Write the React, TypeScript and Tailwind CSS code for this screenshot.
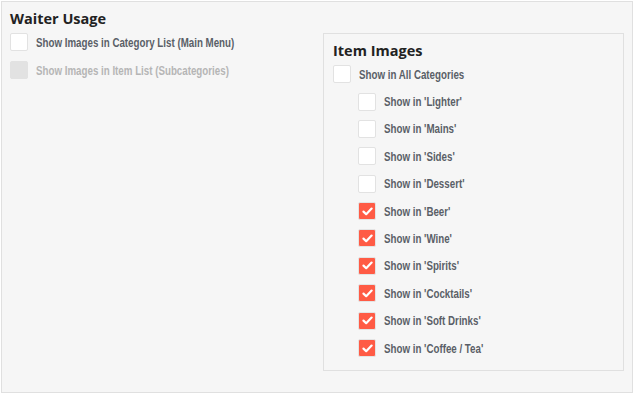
import React from "react";

const items = [
  { label: "Show in 'Lighter'", checked: false },
  { label: "Show in 'Mains'", checked: false },
  { label: "Show in 'Sides'", checked: false },
  { label: "Show in 'Dessert'", checked: false },
  { label: "Show in 'Beer'", checked: true },
  { label: "Show in 'Wine'", checked: true },
  { label: "Show in 'Spirits'", checked: true },
  { label: "Show in 'Cocktails'", checked: true },
  { label: "Show in 'Soft Drinks'", checked: true },
  { label: "Show in 'Coffee / Tea'", checked: true },
];

function Box({ checked, disabled }: { checked?: boolean; disabled?: boolean }) {
  if (checked) {
    return (
      <span className="w-[18px] h-[18px] shrink-0 rounded-[2px] border border-[#e4e4e4] bg-[#ff5b45] flex items-center justify-center">
        <svg width="11" height="9" viewBox="0 0 11 9" fill="none">
          <path d="M1.5 4.6 L4.2 7.2 L9.6 1.6" stroke="white" strokeWidth="2.2" strokeLinecap="round" strokeLinejoin="round" />
        </svg>
      </span>
    );
  }
  return (
    <span
      className={`w-[18px] h-[18px] shrink-0 rounded-[2px] border ${
        disabled ? "bg-[#e2e2e2] border-[#e2e2e2]" : "bg-white border-[#e2e2e2]"
      }`}
    />
  );
}

function Row({ label, checked, disabled }: { label: string; checked?: boolean; disabled?: boolean }) {
  return (
    <div className="flex items-center h-[18px] gap-[8px]">
      <Box checked={checked} disabled={disabled} />
      <span
        className={`inline-block whitespace-nowrap origin-left scale-x-[0.75] text-[13px] font-bold leading-none ${
          disabled ? "text-[#b5b5b5]" : "text-[#5a5f67]"
        }`}
        style={{ fontFamily: '"Liberation Sans", Arial, sans-serif' }}
      >
        {label}
      </span>
    </div>
  );
}

export default function App() {
  return (
    <div className="w-[634px] h-[394px] bg-white p-px">
      <div className="w-full h-full bg-[#f6f6f6] border border-[#e0e0e0] flex">
        {/* Waiter Usage */}
        <div className="w-[321px] pl-[8px] pt-[8px]">
          <h2 className="text-[14.5px] font-bold text-[#222] leading-[18px] mb-[5px]" style={{ fontFamily: '"Open Sans", sans-serif' }}>
            Waiter Usage
          </h2>
          <div className="flex flex-col gap-[10px]">
            <Row label="Show Images in Category List (Main Menu)" />
            <Row label="Show Images in Item List (Subcategories)" disabled />
          </div>
        </div>

        {/* Item Images */}
        <div className="mt-[31px] w-[301px] h-[338px] border border-[#e0e0e0] pl-[9px] pt-[8px]">
          <h2 className="text-[14.5px] font-bold text-[#222] leading-[18px] mb-[5px]" style={{ fontFamily: '"Open Sans", sans-serif' }}>
            Item Images
          </h2>
          <Row label="Show in All Categories" />
          <div className="flex flex-col gap-[9.4px] pl-[25px] mt-[9.5px]">
            {items.map((it) => (
              <Row key={it.label} label={it.label} checked={it.checked} />
            ))}
          </div>
        </div>
      </div>
    </div>
  );
}
